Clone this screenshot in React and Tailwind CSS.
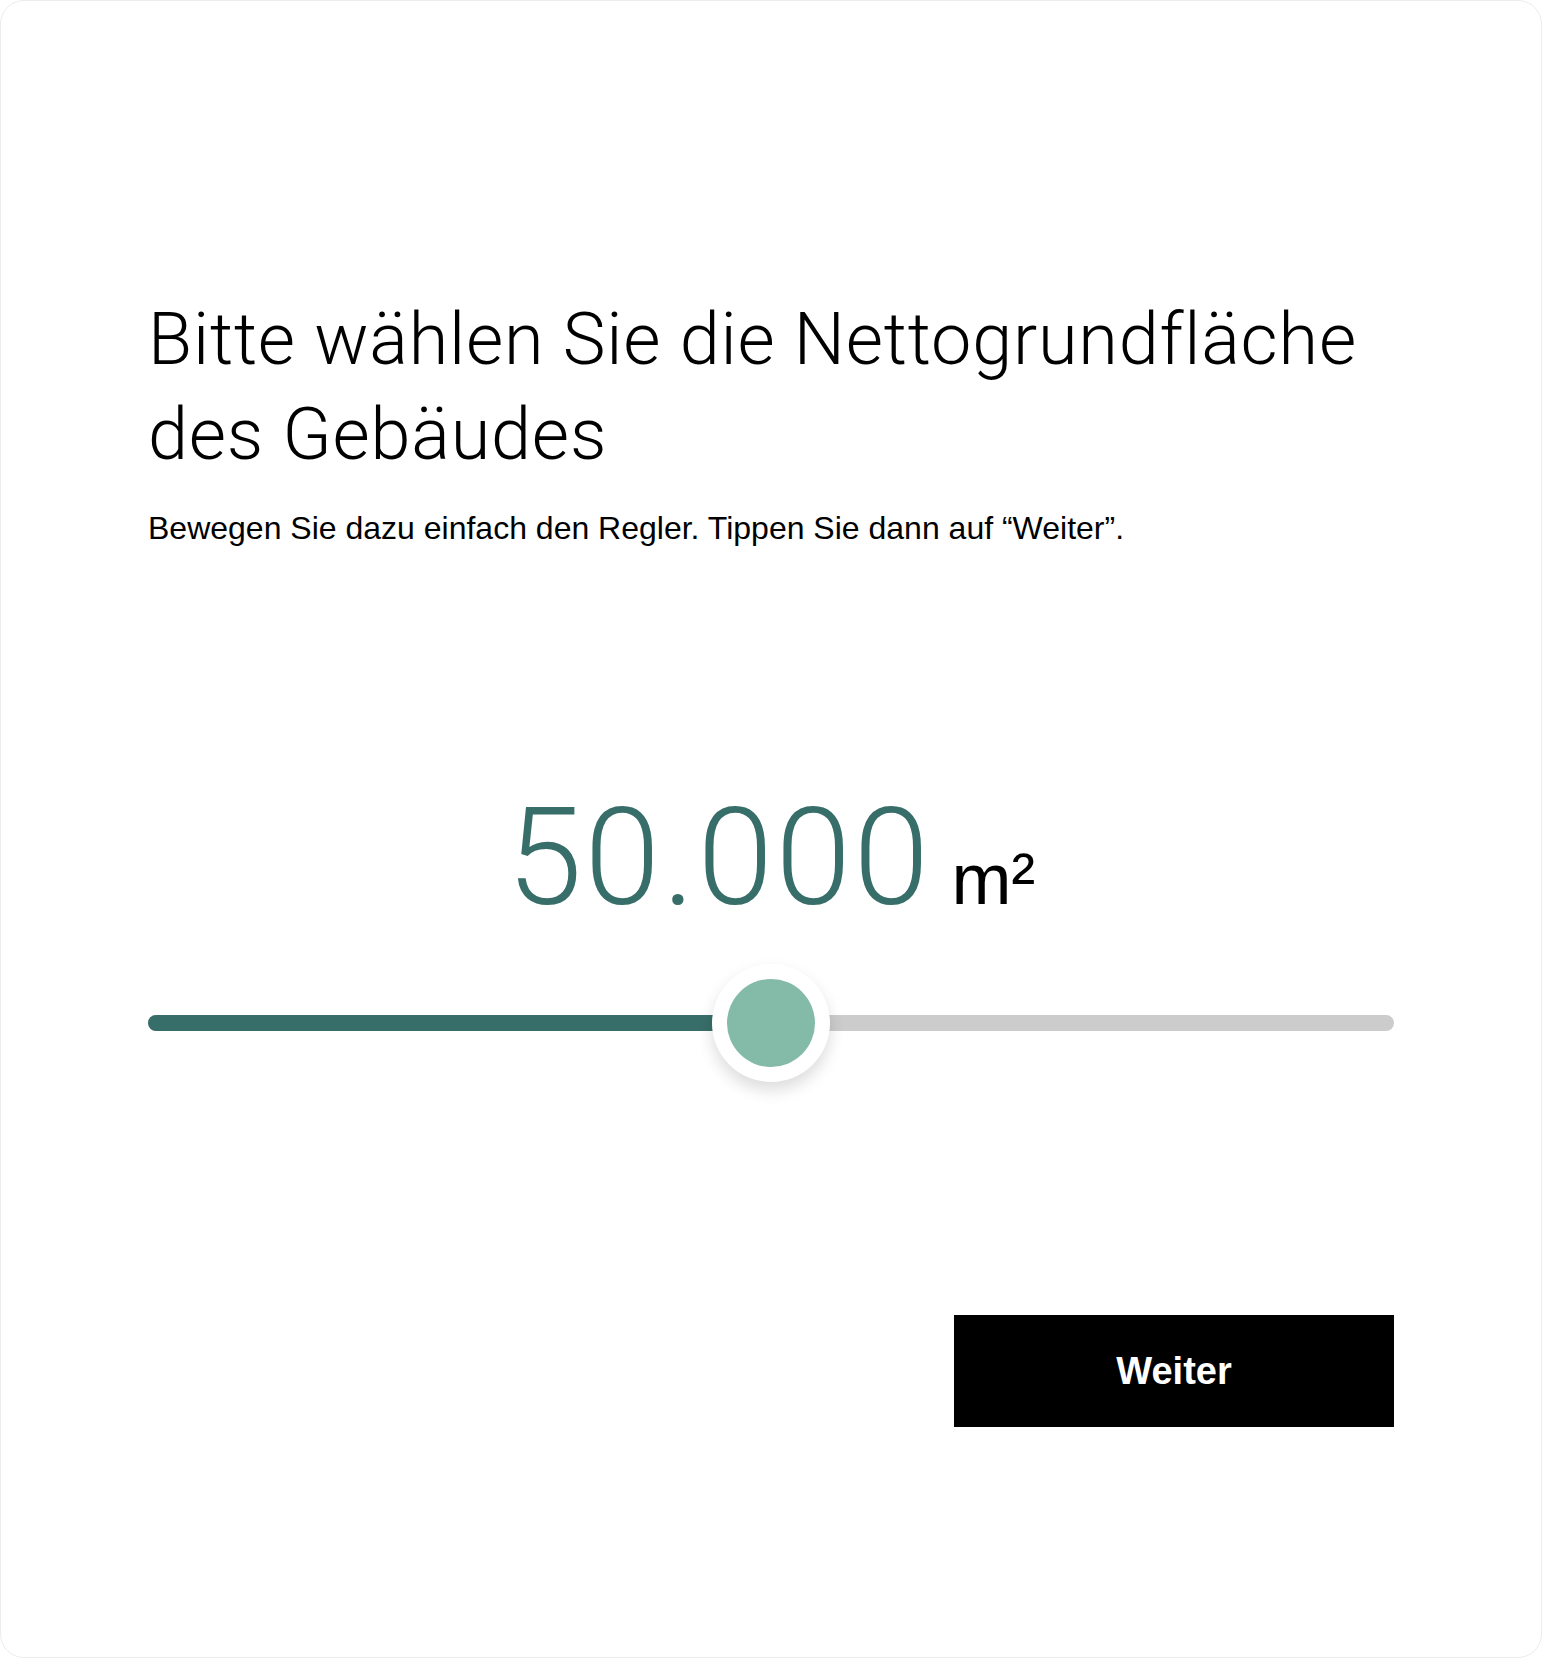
import React from 'react';

const value = 50000;
const min = 0;
const max = 100000;

export default function App() {
  const pct = ((value - min) / (max - min)) * 100;

  return (
    <div className="min-h-screen bg-white">
      <div className="min-h-[1658px] w-full rounded-[24px] border border-[#ececec] bg-white px-[147px] pt-[291px] pb-[200px]">
        <h1
          className="text-[72px] leading-[95px] font-light tracking-[0.8px] text-black"
          style={{ fontFamily: 'Roboto, "Liberation Sans", sans-serif' }}
        >
          Bitte wählen Sie die Nettogrundfläche
          <br />
          des Gebäudes
        </h1>
        <p
          className="mt-[28px] text-[32px] leading-[37px] text-black"
          style={{ fontFamily: '"Liberation Sans", Arial, sans-serif' }}
        >
          Bewegen Sie dazu einfach den Regler. Tippen Sie dann auf “Weiter”.
        </p>

        <div className="mt-[243px] flex items-baseline justify-center gap-[20px]">
          <span
            className="text-[136px] leading-[136px] font-light tracking-[2.5px] text-[#386e69]"
            style={{ fontFamily: 'Roboto, "Liberation Sans", sans-serif' }}
          >
            50.000
          </span>
          <span
            className="text-[72px] leading-[72px] text-black"
            style={{ fontFamily: '"Liberation Sans", Arial, sans-serif' }}
          >
            m²
          </span>
        </div>

        <div className="relative mt-[37px] flex h-[120px] items-center">
          <div className="h-4 w-full overflow-hidden rounded-full bg-[#cbcccb]">
            <div className="h-full bg-[#386e69]" style={{ width: `${pct}%` }} />
          </div>
          <div
            className="absolute top-1/2 flex h-[118px] w-[118px] -translate-x-1/2 -translate-y-1/2 items-center justify-center rounded-full bg-white shadow-[0_8px_16px_rgba(0,0,0,0.14)]"
            style={{ left: `${pct}%` }}
          >
            <div className="h-[88px] w-[88px] rounded-full bg-[#84bba8]" />
          </div>
        </div>

        <div className="mt-[232px] flex justify-end">
          <button
            className="flex h-[112px] w-[440px] items-center justify-center bg-black text-[38px] font-bold text-white"
            style={{ fontFamily: '"Liberation Sans", Arial, sans-serif' }}
          >
            Weiter
          </button>
        </div>
      </div>
    </div>
  );
}
